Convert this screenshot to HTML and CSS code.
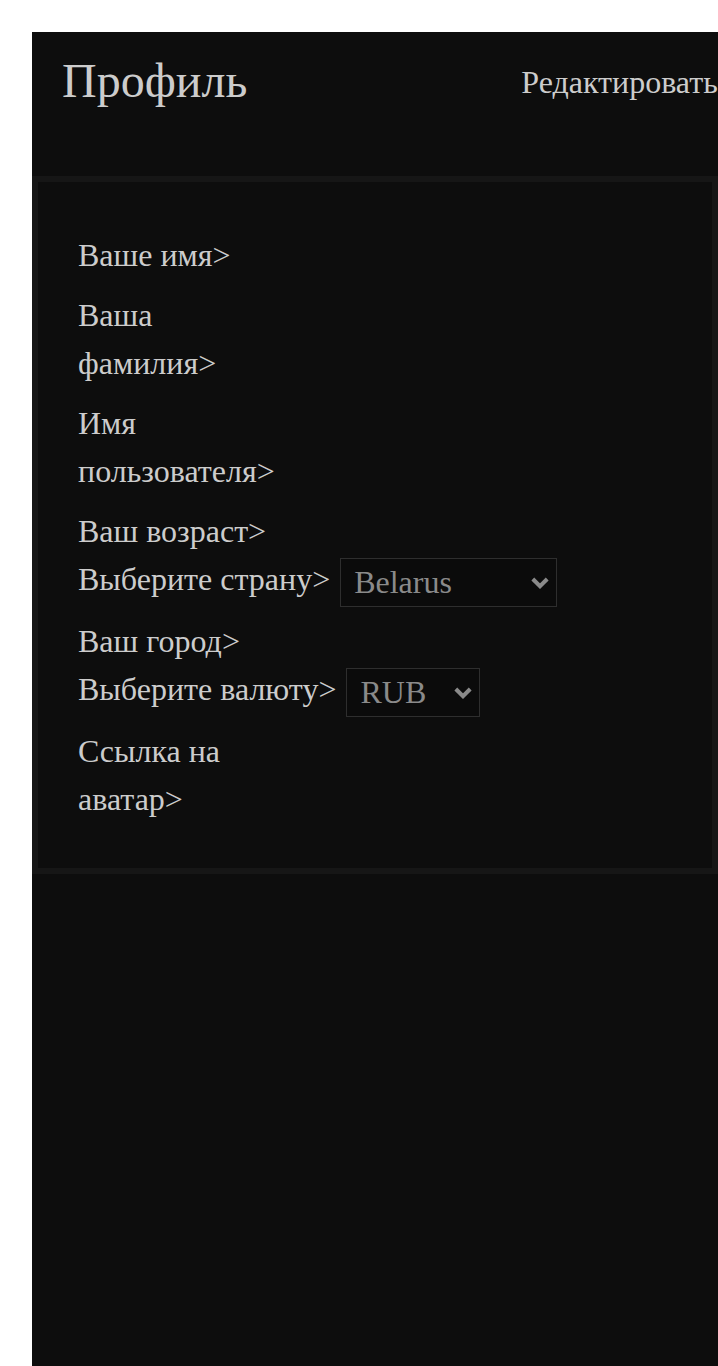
FILE: index.html
```html
<!DOCTYPE html>
<html lang="ru">
<head>
<meta charset="utf-8">
<title>Профиль</title>
<link rel="stylesheet" href="styles.css">
</head>
<body>
<div class="panel">
  <header class="header">
    <h1 class="title">Профиль</h1>
    <span class="edit">Редактировать</span>
  </header>
  <form class="form">
    <div class="field">
      <label class="label">Ваше имя&gt;</label>
      <input class="input" type="text">
    </div>
    <div class="field">
      <label class="label">Ваша фамилия&gt;</label>
      <input class="input" type="text">
    </div>
    <div class="field">
      <label class="label">Имя пользователя&gt;</label>
      <input class="input" type="text">
    </div>
    <div class="group">
      <div class="field">
        <label class="label">Ваш возраст&gt;</label>
        <input class="input" type="text">
      </div>
      <div class="field select-field">
        <label class="label wide">Выберите страну&gt;</label>
        <div class="select-wrap country">
          <select class="select"><option>Belarus</option></select>
          <svg class="chev" viewBox="0 0 18 12" width="18" height="12"><path d="M1.8 2 L9 9.2 L16.2 2" fill="none" stroke="#8a8a8a" stroke-width="4"/></svg>
        </div>
      </div>
    </div>
    <div class="group">
      <div class="field">
        <label class="label">Ваш город&gt;</label>
        <input class="input" type="text">
      </div>
      <div class="field select-field">
        <label class="label wide">Выберите валюту&gt;</label>
        <div class="select-wrap currency">
          <select class="select"><option>RUB</option></select>
          <svg class="chev" viewBox="0 0 18 12" width="18" height="12"><path d="M1.8 2 L9 9.2 L16.2 2" fill="none" stroke="#8a8a8a" stroke-width="4"/></svg>
        </div>
      </div>
    </div>
    <div class="field">
      <label class="label">Ссылка на аватар&gt;</label>
      <input class="input" type="text">
    </div>
  </form>
</div>
</body>
</html>
```

FILE: styles.css
```css
html, body {
  margin: 0;
  padding: 0;
}
body {
  background: #ffffff;
  overflow: hidden;
  font-family: "Liberation Serif", "Times New Roman", serif;
}
.panel {
  margin: 32px 0 0 32px;
  width: 686px;
  min-height: 1334px;
  background: #0d0d0d;
  overflow: hidden;
  color: #cccccc;
}
.header {
  box-sizing: border-box;
  height: 144px;
  padding: 21px 0 0 30px;
  display: flex;
  align-items: flex-start;
}
.title {
  margin: 0;
  font-size: 48px;
  line-height: 56px;
  font-weight: normal;
  color: #cccccc;
}
.edit {
  margin-left: 274px;
  margin-top: 9px;
  font-size: 32px;
  line-height: 40px;
  white-space: nowrap;
  color: #cccccc;
}
.form {
  margin: 0;
  border: 6px solid #161616;
  padding: 49px 40px 45px;
  display: flex;
  flex-direction: column;
  gap: 12px;
}
.group {
  display: flex;
  flex-direction: column;
}
.field {
  display: flex;
  align-items: flex-start;
}
.label {
  width: 200px;
  flex: none;
  font-size: 32px;
  line-height: 48px;
  color: #cccccc;
}
.label.wide {
  width: auto;
}
.input {
  flex: 1;
  min-width: 0;
  height: 48px;
  background: transparent;
  border: none;
  outline: none;
  padding: 0;
}
.select-field {
  gap: 10px;
}
.select-wrap {
  position: relative;
  margin-top: 3px;
  margin-bottom: -2px;
}
.country {
  width: 217px;
}
.currency {
  width: 134px;
}
.select {
  appearance: none;
  -webkit-appearance: none;
  box-sizing: border-box;
  width: 100%;
  height: 49px;
  margin: 0;
  padding: 0 0 0 13px;
  background: #0b0b0b;
  border: 1px solid #2e2e2e;
  border-radius: 0;
  color: #8a8a8a;
  font-family: "Liberation Serif", "Times New Roman", serif;
  font-size: 32px;
  line-height: 47px;
}
.chev {
  position: absolute;
  right: 8px;
  top: 19px;
  pointer-events: none;
}
```
